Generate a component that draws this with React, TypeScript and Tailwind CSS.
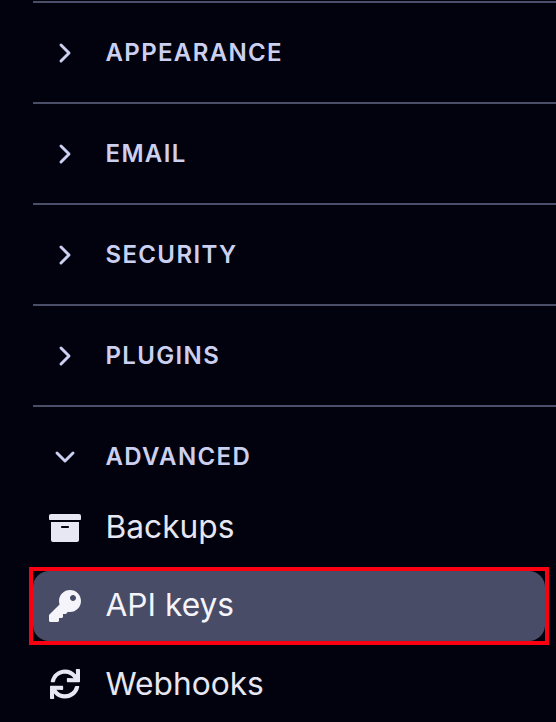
import { ChevronRight, ChevronDown } from "lucide-react";
import { FaArchive, FaKey, FaSync } from "react-icons/fa";

const sections = ["APPEARANCE", "EMAIL", "SECURITY", "PLUGINS"];

function SectionHeader({ label, open }: { label: string; open?: boolean }) {
    return (
        <div className="flex items-center h-[99px]">
            <div className="w-[72.5px] flex justify-start pl-[16px]">
                {open ? (
                    <ChevronDown size={32} strokeWidth={2.2} className="text-[#ccd0f0]" />
                ) : (
                    <ChevronRight size={32} strokeWidth={2.2} className="text-[#ccd0f0]" />
                )}
            </div>
            <span className="text-[24px] font-semibold tracking-[1.35px] text-[#ccd0f0]">{label}</span>
        </div>
    );
}

export default function App() {
    return (
        <div className="w-[556px] h-[722px] overflow-hidden bg-[#02020e] font-['Inter',sans-serif]">
            <div className="pl-[33px] pt-px">
                {sections.map((s) => (
                    <div key={s} className="border-t-2 border-[#4a4e69]">
                        <SectionHeader label={s} />
                    </div>
                ))}
                <div className="border-t-2 border-[#4a4e69]">
                    <SectionHeader label="ADVANCED" open />
                </div>
            </div>
            <div className="-mt-[17px] pl-[29px] pr-[7px]">
                <div className="flex items-center h-[78px] pl-[20px] gap-[24.5px] text-[#e6e7f2]">
                    <FaArchive size={32} className="w-[32px]" />
                    <span className="text-[31.7px] pb-[2px]">Backups</span>
                </div>
                <div className="border-4 border-[#fb0010] h-[78px]">
                    <div className="flex items-center h-full pl-[16px] gap-[24.5px] rounded-[16px] bg-[#484c66] text-[#f4f4fa]">
                        <FaKey size={32} className="w-[32px]" />
                        <span className="text-[31.7px] pb-[2px]">API keys</span>
                    </div>
                </div>
                <div className="flex items-center h-[78px] pl-[20px] gap-[24.5px] text-[#e6e7f2]">
                    <div className="w-[32px] flex justify-center">
                        <FaSync size={30} />
                    </div>
                    <span className="text-[31.7px]">Webhooks</span>
                </div>
            </div>
        </div>
    );
}
